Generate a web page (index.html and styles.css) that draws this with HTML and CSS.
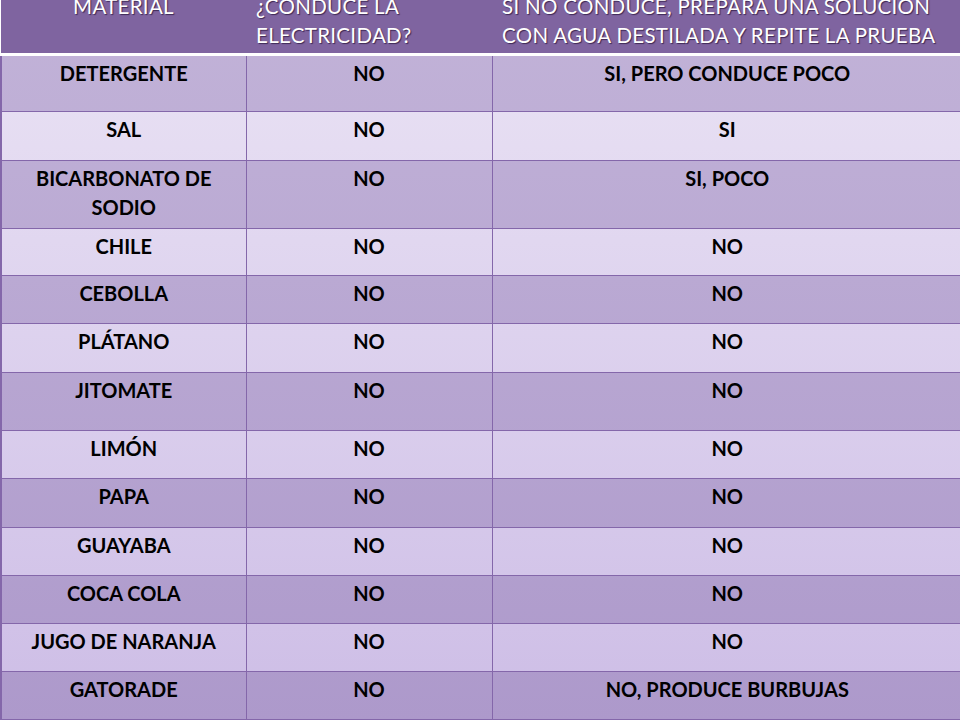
FILE: index.html
```html
<!DOCTYPE html>
<html lang="es">
<head>
<meta charset="utf-8">
<title>Tabla de conductividad</title>
<link rel="stylesheet" href="styles.css">
</head>
<body>
<table class="grid">
  <colgroup>
    <col class="c1"><col class="c2"><col class="c3">
  </colgroup>
  <thead>
    <tr>
      <th class="center">MATERIAL</th>
      <th>¿CONDUCE LA<br>ELECTRICIDAD?</th>
      <th>SI NO CONDUCE, PREPARA UNA SOLUCION<br>CON AGUA DESTILADA Y REPITE LA PRUEBA</th>
    </tr>
  </thead>
  <tbody>
    <tr class="dark h57"><td>DETERGENTE</td><td>NO</td><td>SI, PERO CONDUCE POCO</td></tr>
    <tr class="light h49"><td>SAL</td><td>NO</td><td>SI</td></tr>
    <tr class="dark h68"><td>BICARBONATO DE SODIO</td><td>NO</td><td>SI, POCO</td></tr>
    <tr class="light h47"><td>CHILE</td><td>NO</td><td>NO</td></tr>
    <tr class="dark h48"><td>CEBOLLA</td><td>NO</td><td>NO</td></tr>
    <tr class="light h49"><td>PLÁTANO</td><td>NO</td><td>NO</td></tr>
    <tr class="dark h58"><td>JITOMATE</td><td>NO</td><td>NO</td></tr>
    <tr class="light h48"><td>LIMÓN</td><td>NO</td><td>NO</td></tr>
    <tr class="dark h49"><td>PAPA</td><td>NO</td><td>NO</td></tr>
    <tr class="light h48"><td>GUAYABA</td><td>NO</td><td>NO</td></tr>
    <tr class="dark h48"><td>COCA COLA</td><td>NO</td><td>NO</td></tr>
    <tr class="light h48"><td>JUGO DE NARANJA</td><td>NO</td><td>NO</td></tr>
    <tr class="dark h48"><td>GATORADE</td><td>NO</td><td>NO, PRODUCE BURBUJAS</td></tr>
  </tbody>
</table>
</body>
</html>
```

FILE: styles.css
```css
html, body {
  margin: 0;
  padding: 0;
  background: #ffffff;
  overflow: hidden;
}

body {
  font-family: Lato, "Liberation Sans", sans-serif;
}

.grid {
  width: 961px;
  margin-top: -8px;
  border-collapse: collapse;
  table-layout: fixed;
}

.c1 { width: 245px; }
.c2 { width: 246px; }
.c3 { width: 470px; }

.grid th {
  background: #7f64a0;
  color: #ffffff;
  font-weight: 400;
  font-size: 20.5px;
  letter-spacing: 0.3px;
  line-height: 29px;
  text-align: left;
  vertical-align: top;
  white-space: nowrap;
  padding: 0 0 3px 10px;
  text-shadow: 1px 1px 1px rgba(40, 20, 60, 0.75);
  border-bottom: 3px solid #ffffff;
}

.grid th.center {
  text-align: center;
  padding-left: 0;
  padding-right: 0;
}

.grid td {
  font-weight: 700;
  font-size: 20px;
  line-height: 29px;
  color: #000000;
  text-align: center;
  vertical-align: top;
  padding: 3px 12px 0;
  border: 1px solid #8467aa;
  border-top: none;
  border-right: none;
}

.grid td:first-child {
  border-left: 2px solid #8467aa;
}

.dark td {
  background: linear-gradient(#c2b3d8, #ad99cb) fixed;
}

.light td {
  background: linear-gradient(#ebe4f5, #cdbde6) fixed;
}

.h47 { height: 47px; }
.h48 { height: 48px; }
.h49 { height: 49px; }
.h57 { height: 57px; }
.h58 { height: 58px; }
.h68 { height: 68px; }
```
